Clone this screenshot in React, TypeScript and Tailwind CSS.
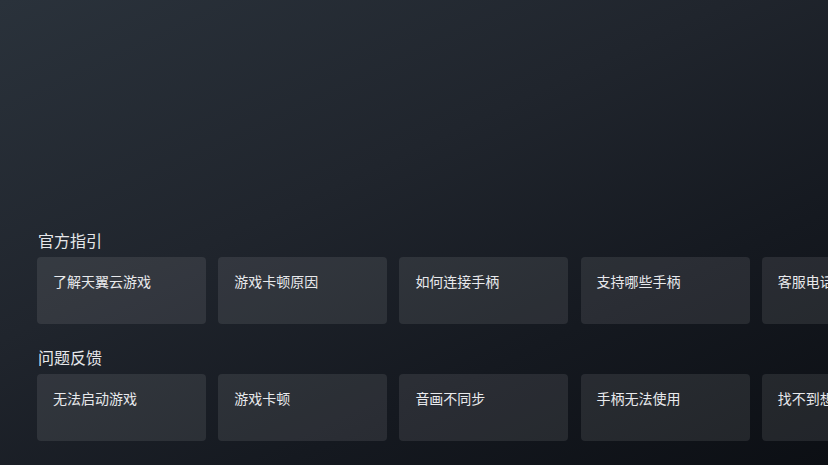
const guides = ["了解天翼云游戏", "游戏卡顿原因", "如何连接手柄", "支持哪些手柄", "客服电话"];
const feedback = ["无法启动游戏", "游戏卡顿", "音画不同步", "手柄无法使用", "找不到想玩的游戏"];

function Section({ title, items }: { title: string; items: string[] }) {
  return (
    <section className="flex flex-col">
      <h2 className="ml-[38px] h-[17px] text-[16px] leading-[17px] text-[#e6e7ea] mb-[8px]">{title}</h2>
      <div className="flex gap-[12.2px] pl-[37px] overflow-hidden">
        {items.map((item) => (
          <div
            key={item}
            className="shrink-0 w-[169px] h-[67px] rounded-[4px] bg-white/[0.09] pl-[16px] pt-[15px] text-[14px] leading-[18px] text-[#e8e9ec] whitespace-nowrap"
          >
            {item}
          </div>
        ))}
      </div>
    </section>
  );
}

export default function App() {
  return (
    <div
      className="w-[828px] h-[465px] overflow-hidden bg-[linear-gradient(155deg,#2a323b_0%,#20252d_40%,#151920_70%,#0c0f14_100%)] pt-[232px] flex flex-col gap-[25px]"
      style={{ fontFamily: '"Noto Sans CJK SC", "Noto Sans", sans-serif' }}
    >
      <Section title="官方指引" items={guides} />
      <Section title="问题反馈" items={feedback} />
    </div>
  );
}
